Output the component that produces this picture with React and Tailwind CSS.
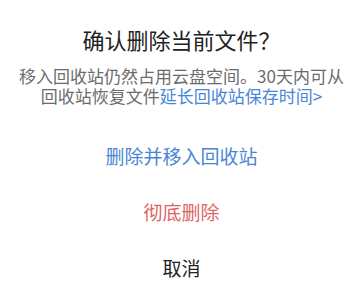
export default function App() {
  return (
    <div
      className="w-[363px] h-[291px] bg-white flex flex-col items-center overflow-hidden"
      style={{ fontFamily: '"Noto Sans CJK SC", "Noto Sans", sans-serif' }}
    >
      <h1 className="pt-[24px] text-[22px] leading-[30px] text-[#222222] font-normal">确认删除当前文件？</h1>
      <p className="mt-[12px] px-[14px] text-center text-[17px] leading-[20px] text-[#6b6b6b]">
        移入回收站仍然占用云盘空间。30天内可从回收站恢复文件
        <span className="text-[#4a86d6]">延长回收站保存时间&gt;</span>
      </p>
      <div className="mt-[22px] w-full flex flex-col">
        <button className="h-[56px] flex items-center justify-center text-[19px] text-[#4a86d6]">删除并移入回收站</button>
        <button className="h-[56px] flex items-center justify-center text-[19px] text-[#e06464]">彻底删除</button>
        <button className="h-[56px] flex items-center justify-center text-[19px] text-[#222222]">取消</button>
      </div>
    </div>
  );
}
